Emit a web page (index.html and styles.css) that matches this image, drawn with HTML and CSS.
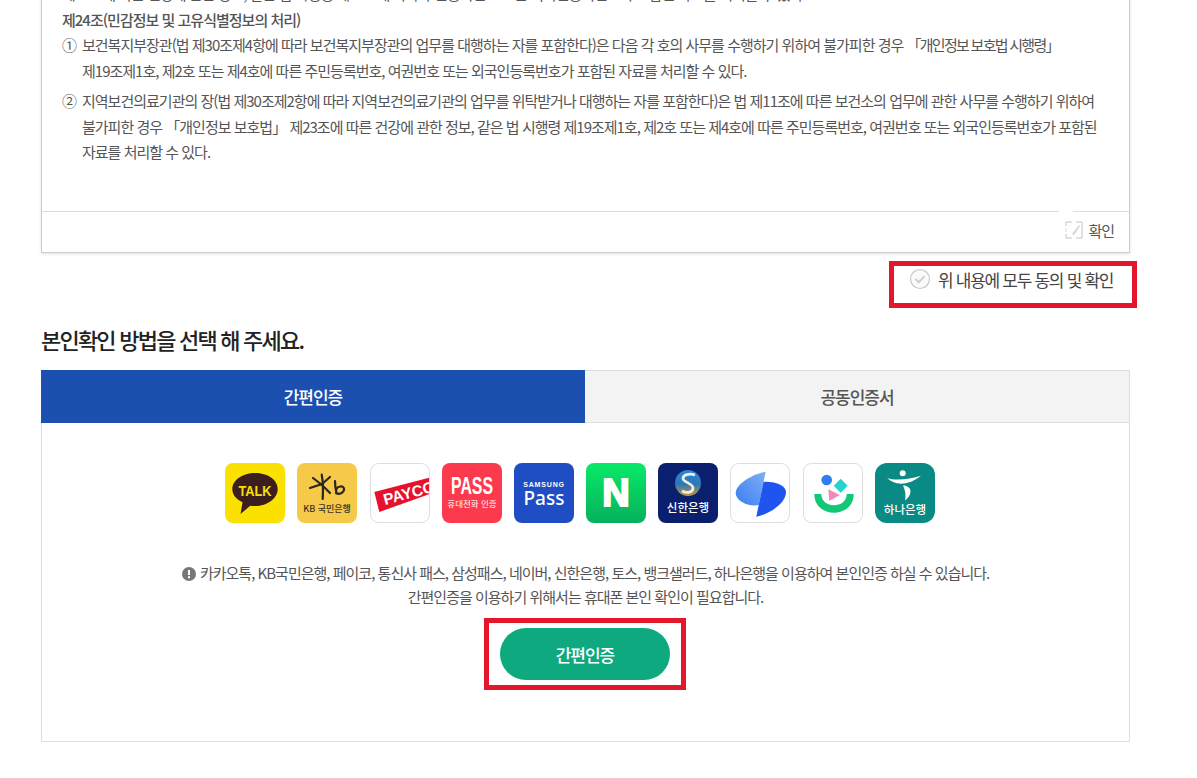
FILE: index.html
```html
<!DOCTYPE html>
<html lang="ko">
<head>
    <meta charset="UTF-8">
    <meta name="viewport" content="width=device-width, initial-scale=1.0">
    <title>본인확인</title>
    <link rel="stylesheet" href="styles.css">
</head>
<body>
    <div class="wrap">
        <section class="terms">
            <div class="terms-body">
                <p class="cut-line">제23조에 따른 건강에 관한 정보, 같은 법 시행령 제19조에 따라 주민등록번호 또는 외국인등록번호가 포함된 자료를 처리할 수 있다.</p>
                <p class="terms-title">제24조(민감정보 및 고유식별정보의 처리)</p>
                <div class="terms-item">
                    <span class="num">①</span>
                    <p>보건복지부장관(법 제30조제4항에 따라 보건복지부장관의 업무를 대행하는 자를 포함한다)은 다음 각 호의 사무를 수행하기 위하여 불가피한 경우 <span class="law">「개인정보 보호법 시행령」</span><br>제19조제1호, 제2호 또는 제4호에 따른 주민등록번호, 여권번호 또는 외국인등록번호가 포함된 자료를 처리할 수 있다.</p>
                </div>
                <div class="terms-item">
                    <span class="num">②</span>
                    <p>지역보건의료기관의 장(법 제30조제2항에 따라 지역보건의료기관의 업무를 위탁받거나 대행하는 자를 포함한다)은 법 제11조에 따른 보건소의 업무에 관한 사무를 수행하기 위하여<br>불가피한 경우 「개인정보 보호법」 제23조에 따른 건강에 관한 정보, 같은 법 시행령 제19조제1호, 제2호 또는 제4호에 따른 주민등록번호, 여권번호 또는 외국인등록번호가 포함된<br>자료를 처리할 수 있다.</p>
                </div>
            </div>
            <div class="terms-foot">
                <button class="confirm-btn">
                    <svg class="broken-icon" width="18" height="18" viewBox="0 0 18 18">
                        <path d="M1 5V1h6M11 1h6v16h-6M7 17H1v-4" fill="none" stroke="#c4c4c4"/>
                        <path d="M1 7v4" stroke="#dedede"/>
                        <path d="M7 13l7-9 1 1-6 9z" fill="#d4d4d4"/>
                    </svg>
                    확인
                </button>
            </div>
        </section>

        <div class="agree-row">
            <div class="red-box agree-box">
                <svg width="22" height="22" viewBox="0 0 22 22">
                    <circle cx="11" cy="11" r="9.5" fill="#fafafa" stroke="#c9c9c9" stroke-width="1.2"/>
                    <path d="M6.5 11l3.2 3.2 5.8-6" fill="none" stroke="#cfcfcf" stroke-width="2"/>
                </svg>
                <span>위 내용에 모두 동의 및 확인</span>
            </div>
        </div>

        <h2 class="section-title">본인확인 방법을 선택 해 주세요.</h2>

        <div class="tabs">
            <div class="tab active">간편인증</div>
            <div class="tab">공동인증서</div>
        </div>

        <div class="panel">
            <ul class="cert-list">
                <li>
                    <svg viewBox="0 0 60 60" class="logo">
                        <rect width="60" height="60" rx="8" fill="#fae100"/>
                        <path d="M30 10C17.500 10 7.300 17.200 7.300 26c0 5.600 4 10.400 10.200 13.200L15.500 51l9.800-8.300c1.500.2 3.100.3 4.700.3 12.500 0 22.700-7.600 22.700-17S42.500 10 30 10z" fill="#3c1e1e"/>
                        <text x="30" y="33" text-anchor="middle" class="lg-talk">TALK</text>
                    </svg>
                </li>
                <li>
                    <svg viewBox="0 0 60 60" class="logo">
                        <rect width="60" height="60" rx="8" fill="#f7c948"/>
                        <g fill="none" stroke="#2b2620" stroke-width="2.200" stroke-linecap="round">
                            <path d="M24.700 11.500c1.500 8 1.500 16 1 24.500"/>
                            <path d="M13 25l12-4 8-7"/>
                            <path d="M16 15l9 7 8 8"/>
                            <path d="M38 18c0 5 .5 8 1.500 12"/>
                            <path d="M39 27c1-4 8-5 8-1s-5 6-8 4"/>
                        </g>
                        <text x="30" y="48.700" text-anchor="middle" class="lg-kb">KB 국민은행</text>
                    </svg>
                </li>
                <li>
                    <svg viewBox="0 0 60 60" class="logo">
                        <defs><clipPath id="payco-clip"><rect width="59" height="59" rx="8"/></clipPath></defs>
                        <rect x=".5" y=".5" width="59" height="59" rx="8" fill="#fff" stroke="#dddddd"/>
                        <g clip-path="url(#payco-clip)">
                            <path d="M4.300 29L60 14.400V31L9.300 49z" fill="#e8112d"/>
                            <text x="15" y="42" transform="rotate(-15 15 42)" class="lg-payco">PAYCO</text>
                        </g>
                    </svg>
                </li>
                <li>
                    <svg viewBox="0 0 60 60" class="logo">
                        <rect width="60" height="60" rx="8" fill="#fb3a4e"/>
                        <text x="30" y="31.500" text-anchor="middle" class="lg-pass">PASS</text>
                        <text x="30" y="43.500" text-anchor="middle" class="lg-small">휴대전화 인증</text>
                    </svg>
                </li>
                <li>
                    <svg viewBox="0 0 60 60" class="logo">
                        <rect width="60" height="60" rx="8" fill="#1f4ec4"/>
                        <text x="30" y="24" text-anchor="middle" class="lg-samsung">SAMSUNG</text>
                        <text x="30" y="42" text-anchor="middle" class="lg-spass">Pass</text>
                    </svg>
                </li>
                <li>
                    <svg viewBox="0 0 60 60" class="logo">
                        <defs><linearGradient id="naver-bg" x1="0" y1="0" x2="0" y2="1"><stop offset="0" stop-color="#08ea68"/><stop offset="1" stop-color="#06b05c"/></linearGradient></defs>
                        <rect width="60" height="60" rx="8" fill="url(#naver-bg)"/>
                        <text x="30" y="43" text-anchor="middle" class="lg-naver">N</text>
                    </svg>
                </li>
                <li>
                    <svg viewBox="0 0 60 60" class="logo">
                        <defs><linearGradient id="shinhan-bg" x1="0" y1="0" x2="0" y2="1"><stop offset="0" stop-color="#2a86d8"/><stop offset=".55" stop-color="#2a78b8"/><stop offset="1" stop-color="#c8963a"/></linearGradient></defs>
                        <rect width="60" height="60" rx="8" fill="#0a1f6e"/>
                        <circle cx="30" cy="20" r="13" fill="url(#shinhan-bg)"/>
                        <path d="M37 12c-6-2-12 0-12 3.500s10 5 10 9.500-6 5.500-11 3" fill="none" stroke="#f0ecdf" stroke-width="2.800"/>
                        <text x="30" y="48.500" text-anchor="middle" class="lg-bank">신한은행</text>
                    </svg>
                </li>
                <li>
                    <svg viewBox="0 0 60 60" class="logo">
                        <defs><linearGradient id="toss-l" x1="1" y1="0" x2="0" y2="1"><stop offset="0" stop-color="#7fb0f6"/><stop offset="1" stop-color="#3b7cf0"/></linearGradient></defs>
                        <rect x=".5" y=".5" width="59" height="59" rx="8" fill="#fff" stroke="#dddddd"/>
                        <path d="M35.700 8.700L28.800 42C18 44 5.700 38 5.700 30 5.700 22 20 12 35.700 8.700z" fill="url(#toss-l)"/>
                        <path d="M26.300 53.700L33.600 18.700C46 18 56 23 56 29 56 40 40 51 26.300 53.700z" fill="#1f54ee"/>
                    </svg>
                </li>
                <li>
                    <svg viewBox="0 0 60 60" class="logo">
                        <rect x=".5" y=".5" width="59" height="59" rx="8" fill="#fff" stroke="#dddddd"/>
                        <circle cx="23.700" cy="17" r="5.300" fill="#2d7ff0"/>
                        <path d="M37.700 15.700l7 7-7 7-7-7z" fill="#22d6cf"/>
                        <path d="M25.300 26.300L37 32l-10.700 5.700z" fill="#f08ab8"/>
                        <path d="M11.300 31c0 25 39.400 25 39.400 0h-7c0 15-25.400 15-25.400 0z" fill="#12c877"/>
                    </svg>
                </li>
                <li>
                    <svg viewBox="0 0 60 60" class="logo">
                        <rect width="60" height="60" rx="12" fill="#0a8a84"/>
                        <circle cx="27.700" cy="10.300" r="3" fill="#fff"/>
                        <path d="M12.300 15.300c9 2.500 23 1 33.700-2.600-6 5-14 8-20 8-5 0-10-2-13.700-5.400z" fill="#fff"/>
                        <path d="M28 22.500c4.500 0 7.500 2.500 7.500 6 0 3.500-2.500 6.500-5.500 9 1-5 .5-10-2-15z" fill="#fff"/>
                        <text x="30" y="51" text-anchor="middle" class="lg-bank">하나은행</text>
                    </svg>
                </li>
            </ul>

            <p class="notice">
                <svg class="notice-icon" width="14" height="14" viewBox="0 0 14 14">
                    <circle cx="7" cy="7" r="7" fill="#777"/>
                    <rect x="6" y="3" width="2" height="5" fill="#fff"/>
                    <rect x="6" y="9.200" width="2" height="2" fill="#fff"/>
                </svg>
                카카오톡, KB국민은행, 페이코, 통신사 패스, 삼성패스, 네이버, 신한은행, 토스, 뱅크샐러드, 하나은행을 이용하여 본인인증 하실 수 있습니다.<br>간편인증을 이용하기 위해서는 휴대폰 본인 확인이 필요합니다.
            </p>

            <div class="red-box btn-box">
                <button class="cert-btn">간편인증</button>
            </div>
        </div>
    </div>
</body>
</html>
```

FILE: styles.css
```css
* {
    box-sizing: border-box;
}
html, body {
    height: 100%;
}
body {
    margin: 0;
    background: #fff;
    color: #555;
    font-family: 'Noto Sans CJK KR', 'Noto Sans', sans-serif;
    font-size: 15px;
    letter-spacing: -0.066em;
    overflow: hidden;
}
p, ul, h2 {
    margin: 0;
    padding: 0;
}
.wrap {
    width: 1089px;
    margin-left: 41px;
    margin-top: -20px;
}
.terms {
    height: 273px;
    border: 1px solid #ccc;
    border-top: 0;
    box-shadow: 0 1px 3px rgba(0, 0, 0, 0.12);
    display: flex;
    flex-direction: column;
}
.terms-body {
    flex: 1;
    padding: 1px 20px 0;
    line-height: 25.5px;
    overflow: hidden;
}
.terms-title {
    font-weight: 500;
}
.terms-item {
    display: flex;
    margin-bottom: 5px;
}
.num {
    width: 20px;
    flex-shrink: 0;
}
.law {
    letter-spacing: -0.115em;
}
.terms-foot {
    height: 41px;
    border-top: 1px solid #ddd;
    display: flex;
    justify-content: flex-end;
}
.confirm-btn {
    position: relative;
    height: 36px;
    padding: 0 15px 0 6px;
    border: 0;
    background: none;
    color: #555;
    font: inherit;
    letter-spacing: inherit;
    display: flex;
    align-items: center;
    gap: 5px;
}
.confirm-btn::before {
    content: "";
    position: absolute;
    top: -2px;
    left: 0;
    width: 14px;
    height: 3px;
    background: #fff;
}
.broken-icon {
    flex-shrink: 0;
}
.red-box {
    border: 5px solid #e4162b;
}
.agree-row {
    display: flex;
    justify-content: flex-end;
    margin: 8px -7px 0 0;
}
.agree-box {
    width: 248px;
    height: 47px;
    padding: 0 0 11px 15px;
    display: flex;
    align-items: center;
    gap: 7px;
    font-size: 17px;
    letter-spacing: -0.076em;
    color: #444;
}
.section-title {
    margin: 15px 0 14px;
    height: 33px;
    line-height: 33px;
    font-size: 22px;
    font-weight: 500;
    letter-spacing: -0.081em;
    color: #222;
}
.tabs {
    display: flex;
    height: 53px;
}
.tab {
    flex: 1;
    display: flex;
    align-items: center;
    justify-content: center;
    background: #f3f3f3;
    border: 1px solid #ddd;
    border-left: 0;
    font-size: 17px;
    font-weight: 500;
    letter-spacing: -0.06em;
    color: #555;
}
.tab.active {
    flex: 0 0 544px;
    background: #1c50b0;
    border: 0;
    color: #fff;
}
.panel {
    height: 319px;
    border: 1px solid #ddd;
    border-top: 0;
    display: flex;
    flex-direction: column;
    align-items: center;
}
.cert-list {
    list-style: none;
    display: flex;
    gap: 12.2px;
    margin: 40px 11px 0 0;
}
.cert-list li {
    width: 60px;
    height: 60px;
}
.logo {
    display: block;
    width: 60px;
    height: 60px;
}
.logo text {
    font-family: 'Noto Sans CJK KR', sans-serif;
    letter-spacing: 0;
}
.logo .lg-talk {
    font-family: 'Liberation Sans', sans-serif;
    font-size: 15px;
    font-weight: 700;
    fill: #fae100;
    transform: scaleX(0.85);
    transform-origin: 30px 0;
}
.logo .lg-kb {
    font-size: 9px;
    font-weight: 500;
    fill: #3a3226;
}
.logo .lg-payco {
    font-family: 'Liberation Sans', sans-serif;
    font-size: 15.5px;
    font-weight: 700;
    fill: #fff;
}
.logo .lg-pass {
    font-family: 'Liberation Sans', sans-serif;
    font-size: 24px;
    font-weight: 700;
    fill: #fff;
    transform: scaleX(0.66);
    transform-origin: 30px 0;
}
.logo .lg-small {
    font-size: 8.5px;
    fill: #fff;
}
.logo .lg-samsung {
    font-family: 'Liberation Sans', sans-serif;
    font-size: 7px;
    font-weight: 700;
    letter-spacing: 0.12em;
    fill: #fff;
}
.logo .lg-spass {
    font-family: 'Noto Sans', sans-serif;
    font-size: 19px;
    font-weight: 500;
    fill: #fff;
}
.logo .lg-naver {
    font-family: 'Liberation Sans', sans-serif;
    font-size: 38px;
    font-weight: 700;
    fill: #fff;
    stroke: #fff;
    stroke-width: 2px;
}
.logo .lg-bank {
    font-size: 11.5px;
    font-weight: 500;
    fill: #fff;
}
.notice {
    margin-top: 38px;
    text-align: center;
    line-height: 24px;
}
.notice-icon {
    vertical-align: -2px;
    margin-right: 1px;
}
.btn-box {
    width: 202px;
    height: 72px;
    margin: 9px 1px 0 0;
    padding: 5px 11px;
}
.cert-btn {
    width: 100%;
    height: 100%;
    border: 0;
    border-radius: 26px;
    background: #0fa980;
    color: #fff;
    font: inherit;
    font-size: 17px;
    font-weight: 500;
    letter-spacing: -0.06em;
}
```
